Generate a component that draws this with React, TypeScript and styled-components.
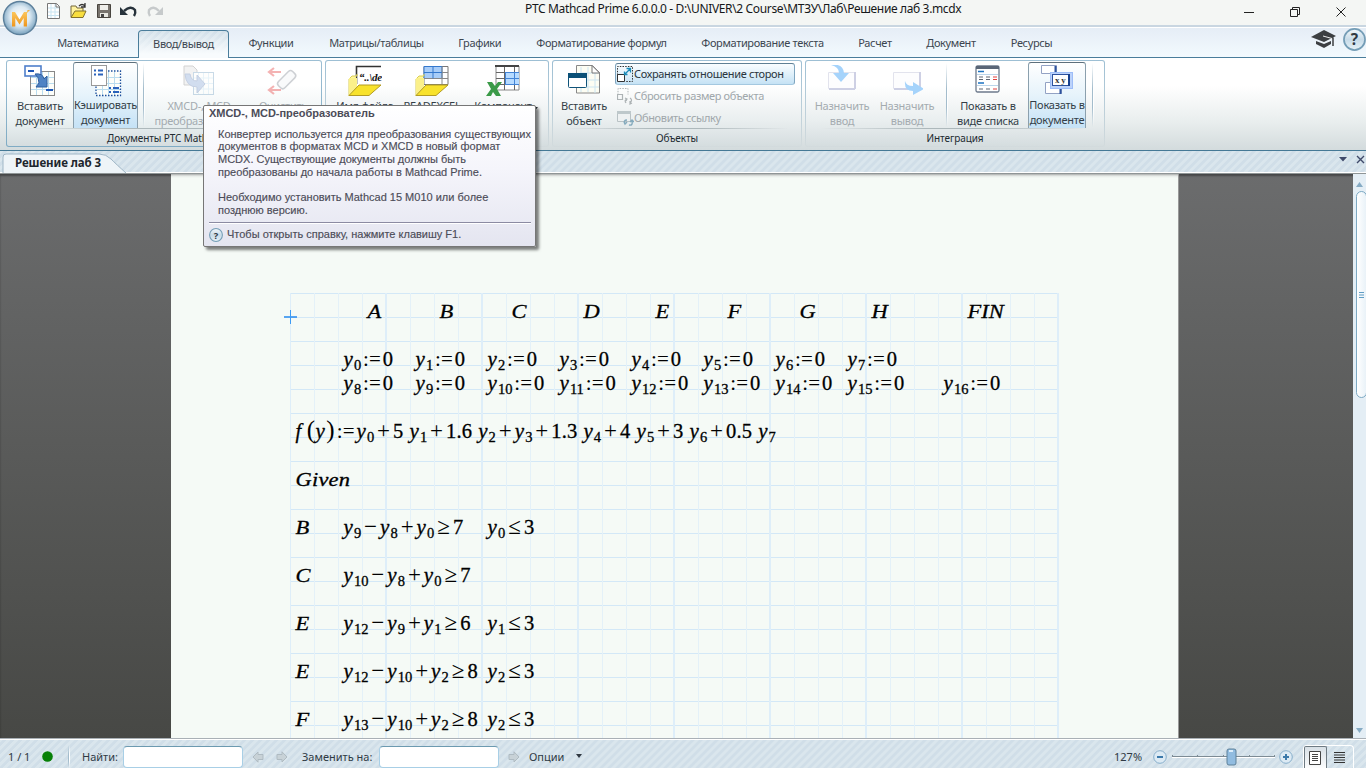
import React from 'react';
import styled, { createGlobalStyle, css } from 'styled-components';

const ui = `'Noto Sans', 'Open Sans', sans-serif`;
const stripes = `repeating-linear-gradient(135deg, #dae6ed 0 2.2px, #d0dee8 3px 5px, #dae6ed 5.66px)`;

const Global = createGlobalStyle`
  html, body { margin: 0; padding: 0; }
  body { width: 1366px; height: 768px; overflow: hidden; font-family: ${ui}; color: #36424c; }
  * { box-sizing: border-box; }
  svg { display: block; flex: none; }
`;

const Window = styled.div`
  position: relative;
  width: 1366px;
  height: 768px;
  display: flex;
  flex-direction: column;
  overflow: hidden;
  background: #f4f6f4;
`;

/* ---------- title bar ---------- */
const TitleBar = styled.header`
  height: 25px;
  flex: none;
  display: flex;
  align-items: flex-start;
  background: #f4f6f4;
`;
const QuickAccess = styled.div`
  width: 525px;
  height: 22px;
  padding-left: 46px;
  display: flex;
  align-items: center;
  gap: 8px;
`;
const WindowTitle = styled.div`
  flex: 1;
  font-size: 12px;
  line-height: 18px;
  letter-spacing: -0.35px;
  color: #16181a;
  white-space: nowrap;
`;
const WindowButtons = styled.div`
  width: 138px;
  height: 23px;
  margin-right: 2px;
  display: flex;
  align-items: center;
  justify-content: space-around;
`;
const LogoOrb = styled.div`
  position: absolute;
  left: 2px;
  top: 0;
`;

/* ---------- ribbon tabs ---------- */
const TabBar = styled.nav`
  height: 33px;
  flex: none;
  padding-left: 38px;
  display: flex;
  align-items: flex-end;
  border-top: 2px solid #c9d6e1;
  border-bottom: 1px solid #4a7d9b;
  background: linear-gradient(#fff 0 1px, #e5edf6 1px, #f3fafe);
`;
const Tab = styled.div<{ $w: number; $on?: boolean }>`
  width: ${p => p.$w}px;
  height: 28px;
  line-height: 28px;
  text-align: center;
  font-size: 11px;
  letter-spacing: -0.36px;
  white-space: nowrap;
  color: #3c4650;
  ${p => p.$on && css`
    margin-bottom: -1px;
    line-height: 25px;
    border: 1px solid #4a7d9b;
    border-bottom: 0;
    border-radius: 4px 4px 0 0;
    background: linear-gradient(rgba(248, 252, 254, 0), #f8fbfd 85%), ${stripes};
  `}
`;
const TabTools = styled.div`
  margin-left: auto;
  height: 29px;
  display: flex;
  align-items: flex-start;
  gap: 6px;
`;

/* ---------- ribbon ---------- */
const Ribbon = styled.section`
  height: 93px;
  flex: none;
  display: flex;
  gap: 3px;
  padding: 2px 0 0 6px;
  border-bottom: 1px solid #457996;
  background: linear-gradient(#fff 0 28px, #e8eded 65px, #d3dbdd);
`;
const Group = styled.div<{ $w: number; $hot?: boolean }>`
  width: ${p => p.$w}px;
  height: 87px;
  display: flex;
  flex-direction: column;
  border-radius: 3px;
  border: 1px solid transparent;
  background:
    linear-gradient(#fff 0 24px, ${p => (p.$hot ? '#eaf1f2' : '#e9eeef')} 60px, #d5dddf) padding-box,
    linear-gradient(#9dbfd4, ${p => (p.$hot ? '#7fabc4' : '#d3dbdd')}) border-box;
`;
const GroupBody = styled.div`
  position: relative;
  height: 69px;
  display: flex;
  align-items: flex-start;
  padding-top: 1px;
  background: linear-gradient(90deg, transparent 5%, #adb8bb 40%, #adb8bb 60%, transparent 95%) bottom 1px left 0 / 100% 1px no-repeat;
`;
const GroupName = styled.div<{ $left?: number }>`
  height: 16px;
  line-height: 16px;
  font-size: 10px;
  padding-left: ${p => p.$left ?? 0}px;
  text-align: ${p => (p.$left ? 'left' : 'center')};
  letter-spacing: -0.1px;
  color: #222b31;
  white-space: nowrap;
`;
const BigButton = styled.button<{ $w: number; $on?: boolean; $off?: boolean }>`
  width: ${p => p.$w}px;
  height: 66px;
  flex: none;
  padding: 2px 0 0;
  border: 1px solid transparent;
  display: flex;
  flex-direction: column;
  align-items: center;
  background: none;
  font: 11px/15px ${ui};
  letter-spacing: -0.25px;
  color: ${p => (p.$off ? '#a4abb0' : '#333e47')};
  white-space: nowrap;
  ${p => p.$on && css`
    border-radius: 3px 3px 0 0;
    border-top-color: #5d6f7c;
    border-left-color: #8ba0ae;
    border-right-color: #8ba0ae;
    border-bottom: 0;
    background: linear-gradient(#fff, #e6f3fb 50%, #c5e2f6);
  `}
`;
const BigIcon = styled.span<{ $off?: boolean; $h?: number }>`
  height: ${p => p.$h ?? 33}px;
  flex: none;
  display: flex;
  align-items: flex-start;
  opacity: ${p => (p.$off ? 0.32 : 1)};
`;
const DropMark = styled.svg`
  align-self: flex-end;
  margin: -6px 7px 0 0;
`;
const Separator = styled.i<{ $m: string; $h?: number }>`
  width: 2px;
  height: ${p => p.$h ?? 64}px;
  flex: none;
  margin: ${p => p.$m};
  background: linear-gradient(90deg, #a3bccc 50%, #fff 50%);
  mask: linear-gradient(transparent, #000 40%, #000 70%, transparent);
`;
const SmallStack = styled.div`
  padding-top: 1px;
  display: flex;
  flex-direction: column;
`;
const SmallButton = styled.button<{ $on?: boolean; $off?: boolean }>`
  width: 180px;
  height: 22px;
  padding: 0 0 0 1px;
  border: 1px solid transparent;
  border-radius: 3px;
  display: flex;
  align-items: center;
  gap: 0;
  background: none;
  font: 11px/20px ${ui};
  letter-spacing: -0.36px;
  color: ${p => (p.$off ? '#a0a7ab' : '#2b3640')};
  white-space: nowrap;
  ${p => p.$on && css`
    border-color: #5f7f94 #7fa5bf #a4c8e0 #7fa5bf;
    background: linear-gradient(#fafdff, #e0f0fa 50%, #c5e2f5);
  `}
`;

/* ---------- document tab strip ---------- */
const DocStrip = styled.div`
  height: 23px;
  flex: none;
  display: flex;
  align-items: flex-end;
  justify-content: space-between;
  border-bottom: 1px solid #8f9596;
  box-shadow: inset 0 -1px #fff;
  background: ${stripes};
`;
const DocTab = styled.div`
  position: relative;
  width: 128px;
  height: 20px;
  padding-left: 15px;
  font: bold 11.5px/20px ${ui};
  letter-spacing: -0.1px;
  color: #1d262d;
  white-space: nowrap;
  svg { position: absolute; left: 2px; top: 0; }
  span { position: relative; }
`;
const DocTools = styled.div`
  display: flex;
  align-items: center;
  height: 22px;
  padding-bottom: 5px;
  margin-right: 1px;
  gap: 9px;
`;

/* ---------- worksheet ---------- */
const Workspace = styled.main`
  position: relative;
  height: 564px;
  flex: none;
  display: flex;
  background: linear-gradient(#6b6c6d, #595a59 50%, #474845);
  box-shadow: inset 0 2px 2px rgba(0, 0, 0, 0.35);
`;
const Page = styled.div`
  width: 1008px;
  margin-left: 171px;
  border-right: 1px solid #999;
  padding: 119px 0 0 119px;
  overflow: hidden;
  background: linear-gradient(#a9acab, #e6eae7 2px, transparent 4px), #f5faf6;
`;
const Sheet = styled.div`
  position: relative;
  width: 769px;
  height: 480px;
  display: grid;
  grid-template-columns: repeat(32, 24px);
  grid-auto-rows: 24px;
  background-image:
    linear-gradient(90deg, #deeef9 2px, transparent 2px),
    linear-gradient(90deg, #e4f1f8 1px, transparent 1px),
    linear-gradient(#d3e8f7 1px, transparent 1px);
  background-size: 96px 24px, 24px 24px, 24px 24px;
  background-position: -1px 0, 0 0, 0 0;
`;
const Region = styled.div<{ $c: number; $r: number }>`
  grid-column: ${p => p.$c + 1} / span 1;
  grid-row: ${p => p.$r + 1};
  width: max-content;
  padding-left: 5.5px;
  display: flex;
  align-items: baseline;
  height: 36px;
  font: 20.5px/36px 'Liberation Serif', serif;
  color: #000;
  -webkit-text-stroke: 0.3px #000;
  white-space: pre;
`;
const Name = styled.i<{ $sp?: number }>`
  letter-spacing: ${p => p.$sp ?? 0}px;
  font-size: 19.5px;
  transform: translate(-0.5px, 0.7px) scaleX(1.15);
  transform-origin: 0 50%;
`;
const FunctionName = styled.i`
  width: 11px;
`;
const Var = styled.i`
  width: 10.4px;
  font-size: 21px;
`;
const Sub = styled.span`
  position: relative;
  top: 4px;
  font-size: 14.5px;
  line-height: 1;
`;
const Op = styled.span<{ $w: number; $size?: number }>`
  width: ${p => p.$w}px;
  font-size: ${p => p.$size ?? 23}px;
  line-height: 1;
  display: flex;
  justify-content: center;
  -webkit-text-stroke: 0;
`;
const Crosshair = styled.svg`
  position: absolute;
  left: -6px;
  top: 17px;
`;
const Num = styled.span`
  letter-spacing: 0.15px;
`;
const Paren = styled.span`
  width: 9px;
  text-align: center;
  font-size: 25px;
  line-height: 1;
  -webkit-text-stroke: 0;
`;
const ScrollTrack = styled.div`
  width: 13px;
  margin-left: auto;
  padding-top: 8px;
  display: flex;
  flex-direction: column;
  align-items: center;
  background: #e4eef5;
  color: #86abc4;
`;
const Thumb = styled.div`
  width: 11px;
  height: 207px;
  margin: 4px 0 auto 3px;
  border: 1px solid #7da9c3;
  border-radius: 6px;
  display: flex;
  align-items: center;
  justify-content: center;
  background: linear-gradient(90deg, #fff, #e9f2f8);
`;

/* ---------- status bar ---------- */
const StatusBar = styled.footer`
  height: 30px;
  flex: none;
  display: flex;
  align-items: center;
  padding-top: 6px;
  border-top: 1px solid #a9b0b6;
  font-size: 11px;
  color: #2f3a44;
  white-space: nowrap;
  box-shadow: inset 0 1px #fff;
  background: ${stripes};
`;
const Cell = styled.div<{ $w: number; $pad?: number }>`
  width: ${p => p.$w}px;
  flex: none;
  padding-left: ${p => p.$pad ?? 0}px;
  display: flex;
  align-items: center;
`;
const FindCell = styled(Cell)`
  gap: 12px;
`;
const Field = styled.div`
  width: 120px;
  height: 22px;
  flex: none;
  border: 1px solid #a8cfe6;
  border-top-color: #6c9ab0;
  border-radius: 4px;
  background: #fff;
`;
const ViewModes = styled.div`
  width: 51px;
  height: 24px;
  margin-left: 10px;
  border: 1px solid #fff;
  border-bottom: 0;
  border-radius: 4px 4px 0 0;
  display: flex;
`;
const ViewMode = styled.div<{ $on?: boolean }>`
  width: 27px;
  height: 24px;
  display: flex;
  align-items: center;
  justify-content: center;
  ${p => p.$on && css`
    width: 23px;
    border: 1px solid #6e7a82;
    border-bottom: 0;
    border-radius: 2px 2px 0 0;
    background: linear-gradient(#d8e0e6, #fff);
  `}
`;

/* ---------- tooltip ---------- */
const Tooltip = styled.aside`
  position: absolute;
  left: 203px;
  top: 105px;
  width: 333px;
  height: 142px;
  padding: 0 4px 0 5px;
  border: 1px solid #767676;
  border-radius: 2px;
  background: linear-gradient(#fff, #f5f5fb 45%, #e4e5f0);
  box-shadow: 3px 3px 3px rgba(0, 0, 0, 0.5);
  font: 11px/12.8px 'Liberation Sans', sans-serif;
  color: #4c4c58;
  white-space: nowrap;
`;
const TipTitle = styled.div`
  font-weight: bold;
  letter-spacing: -0.04px;
  line-height: 15px;
`;
const TipBody = styled.div`
  padding: 6.5px 0 0 9px;
  height: 102px;
  -webkit-text-stroke: 0.15px #4c4c58;
  border-bottom: 1px solid #8b8ba2;
  box-shadow: 0 1px #fff;
`;
const TipFooter = styled.div`
  height: 23px;
  display: flex;
  align-items: center;
  gap: 4px;
  -webkit-text-stroke: 0.15px #4c4c58;
`;

/* ---------- icons ---------- */
const GridPaper = ({ x, y, w, h, stroke = '#888' }: { x: number; y: number; w: number; h: number; stroke?: string }) => (
  <g>
    <rect x={x + 0.5} y={y + 0.5} width={w} height={h} fill="#fdfefa" stroke={stroke} />
    {[1, 2, 3].map(i => (
      <path key={i} d={`M${x + (w * i) / 4 + 0.5} ${y + 1}v${h - 1}M${x + 1} ${y + (h * i) / 4 + 0.5}h${w - 1}`} stroke="#b9dcef" />
    ))}
  </g>
);

const InsertDoc = () => (
  <svg width="32" height="32" fill="none">
    <GridPaper x={6} y={6} w={24} h={24} />
    <rect x="1" y="1" width="16" height="10" fill="#fff" stroke="#4f7fcb" strokeWidth="1.6" />
    <path d="M4 6h6M22 25h7" stroke="#1d55b5" strokeWidth="2" />
    <path d="M11 9q8-1 9 5l3-3v11H12l3-4q0-6-4-9z" fill="#4f83c4" stroke="#2f5e9e" />
  </svg>
);
const CacheDoc = () => (
  <svg width="32" height="32" fill="none">
    <GridPaper x={6} y={6} w={24} h={24} stroke="none" />
    <rect x="6" y="6" width="24.5" height="24.5" stroke="#1c4f9c" strokeDasharray="1.5 1.5" strokeWidth="1.3" />
    <rect x="1.5" y=".5" width="15" height="20" fill="#fff" stroke="#999" />
    <path d="M4 5.500h2m2 0h5M4 9.500h2m2 0h5M19 23h2m2 0h6M19 27h2m2 0h6" stroke="#2b62bb" strokeWidth="2" />
  </svg>
);
const ConvertDoc = () => (
  <svg width="32" height="32" fill="none">
    <path d="M1 1h9l4 4v15H1z" fill="#d9d9d9" stroke="#777" />
    <GridPaper x={10} y={7} w={20} h={22} stroke="#5b8db8" />
    <path d="M2 9h5q1 7 7 7v-6l8 9-8 9v-6Q3 22 2 9z" fill="#7397cf" stroke="#4c6fa8" />
  </svg>
);
const ClearIcon = () => (
  <svg width="32" height="32" fill="none">
    <path d="M14 7H3m4-4L2 7l5 4M14 25H3m4-4-5 4 5 4" stroke="#e01515" strokeWidth="2.2" />
    <rect x="10" y="10" width="20" height="9" rx="3" transform="rotate(-45 20 15)" fill="#eef0f3" stroke="#666f7b" strokeWidth="1.5" />
  </svg>
);
const Folder = () => (
  <>
    <path d="M1 31V14l3-3h5v-2" fill="#fff79a" stroke="#d8cc55" />
    <path d="M1 13h8v10L1 31z" fill="#fbf08a" />
    <path d="M1 30.500 11 20H33L21 30.500z" fill="#f8e22c" stroke="#b39c23" />
  </>
);
const PathFile = () => (
  <svg width="34" height="34" fill="none">
    <path d="M8 2h25v17H8z" fill="#fff" />
    <path d="M8.500 19V1.500h24.500" stroke="#333" strokeWidth="1.6" />
    <Folder />
    <text x="11" y="16" fontFamily="Liberation Serif" fontStyle="italic" fontWeight="bold" fontSize="11" fill="#111">“..\de</text>
  </svg>
);
const ExcelRead = () => (
  <svg width="34" height="34" fill="none">
    <path d="M9 1.500h24v18H9z" fill="#fff" stroke="#777" />
    <path d="M9 1.500h18v12H9z" fill="#a8cdf8" stroke="#3478cd" />
    <path d="M27 7.500h6M9 13.500h24M27 1.500v18" stroke="#888" />
    <path d="M9 7.500h18M18 1.500v12" stroke="#3478cd" />
    <Folder />
  </svg>
);
const ExcelComponent = () => (
  <svg width="34" height="34" fill="none">
    <path d="M10 1h23v24H10z" fill="#fff" stroke="#888" />
    <path d="M18 7h15v12H18z" fill="#b7dbff" />
    <path d="M9 0h24" stroke="#444" strokeWidth="4" />
    <path d="M10 7.500h23M10 13.500h23M10 19.500h23M18.500 2v23M28.500 2v23" stroke="#666" />
    <path d="M19 7.500h14M19 13.500h14M19 19.500h14M19.500 8v12M28.500 8v12" stroke="#4384d6" />
    <path d="M1 17h5l3 4 3-4h4l-5 7 4 7h-5l-3-4-2 4H0l5-7z" fill="#3b9a48" />
  </svg>
);
const InsertObject = () => (
  <svg width="34" height="32" fill="none">
    <path d="M9.500.5h16l7 7V28h-23z" fill="#fdfdf3" stroke="#888" />
    <path d="M13 8h19M12 15h20M12 22h20M14 2v25M21 2v25M28 8v20" stroke="#cce5f2" />
    <path d="M25 .5V8h7.500z" fill="#fff" stroke="#777" />
    <rect x="1.500" y="8.500" width="18" height="14" rx="1" fill="#fff" stroke="#0f5379" />
    <path d="M1 8h19v5H1z" fill="#0b5077" />
  </svg>
);
const Assign = ({ out }: { out?: boolean }) => (
  <svg width="32" height="34" fill="none" opacity=".9">
    <path d="M2.500 7.500h27v16h-27z" fill="#fdfdfe" stroke="#dfe0ec" />
    <path d="M29 7v17M3 24h26" stroke="#c9cce2" strokeWidth="2" />
    {out
      ? <path d="M14 16q1 5 8 5v-4l11 7-11 6v-4q-9 0-8-10z" fill="#9ccffb" />
      : <path d="M5 0q12-2 13 8h5l-8 9-8-9h6q0-6-8-8z" fill="#9ccffb" />}
  </svg>
);
const ListView = () => (
  <svg width="26" height="32" fill="none">
    <rect x="1" y="1" width="23" height="26" rx="1.500" fill="#fff" stroke="#6d7a8c" strokeWidth="1.300" />
    <path d="M1 1h23v3H1z" fill="#5a6677" />
    <path d="M2 9.500h21M2 20.500h21" stroke="#bcd5ea" />
    <path d="M3 6.500h6M3 18h6" stroke="#1d73c2" strokeWidth="1.500" />
    <path d="M4 12h4m3 0h4M4 14.500h4m3 0h4M4 24h4m3 0h4" stroke="#5e6470" />
    <path d="M18 12h4M18 14.500h4M18 24h4" stroke="#e04040" />
  </svg>
);
const DocView = () => (
  <svg width="32" height="30" fill="none">
    <path d="M.5.5h15v8H.5zM4.500 17.500h16v11h-16z" fill="#fff" stroke="#93a2c4" />
    <path d="M14.500 1v8M19.500 18v11" stroke="#2d529e" strokeWidth="2" />
    <rect x="9.500" y="7.500" width="22" height="16" fill="#bcd3fb" stroke="#9dbdf8" />
    <rect x="11.500" y="9.500" width="17" height="11" fill="#fff" stroke="#2d529e" />
    <path d="M28 9v12" stroke="#17408e" strokeWidth="2" />
    <text x="14" y="17.500" fontFamily="Liberation Serif" fontWeight="bold" fontSize="9" fill="#333">x y</text>
  </svg>
);
const KeepRatio = () => (
  <svg width="17" height="17" fill="none">
    <path d="M.5 9V.5h15v15H9" stroke="#333" strokeDasharray="1.500 1.200" />
    <path d="M.5 8.500h7v7h-7z" fill="#fff" stroke="#333" />
    <path d="m8 8 5-5M9.500 2.500h4v4M7.500 5.500v3h3" stroke="#198ab8" strokeWidth="1.300" />
  </svg>
);
const ResetSize = () => (
  <svg width="17" height="17" fill="none" stroke="#adb3b5">
    <path d="M1 7V.5h10v6" strokeDasharray="1.500 1.200" />
    <path d="M.5 6.500h5v5h-5zM9 15q-2-3 1-4m-2-1 2 1-1 2M13 10q3 2 0 5m2 0-2 1v-3" strokeWidth="1.200" />
  </svg>
);
const RefreshLink = () => (
  <svg width="17" height="17" fill="none">
    <path d="M.5 2.500h13v9H.5z" fill="#eef1f2" stroke="#b9c2c5" />
    <path d="M0 1h14v3H0z" fill="#bec8cb" />
    <path d="M8 14q-2-4 2-4m-3 2 1 2 2-2M12 15q4 1 3-4m-2 1 2-2 2 2" stroke="#84aabd" strokeWidth="1.400" />
  </svg>
);
const HelpBall = ({ size }: { size: number }) => (
  <svg width={size} height={size} viewBox="0 0 24 24">
    <defs>
      <linearGradient id="ball" x2="0" y2="1">
        <stop stopColor="#f3f8fb" /><stop offset=".5" stopColor="#c7dbe8" /><stop offset="1" stopColor="#e7f2f7" />
      </linearGradient>
    </defs>
    <circle cx="12" cy="12" r="11" fill="url(#ball)" stroke="#749db6" strokeWidth="1.800" />
    <text x="12" y="18" textAnchor="middle" fontFamily="Noto Sans" fontWeight="bold" fontSize="16" fill="#303942">?</text>
  </svg>
);
const FindArrow = ({ left }: { left?: boolean }) => (
  <svg width="12" height="12" fill="none">
    <path d="M1 3.500h5V.8L11 6l-5 5V8.500H1z" transform={left ? 'rotate(180 6 6)' : undefined} fill="#c8d2d7" stroke="#afbbc2" />
  </svg>
);
const ZoomBall = ({ plus }: { plus?: boolean }) => (
  <svg width="14" height="14" fill="none">
    <circle cx="7" cy="7" r="6.300" fill="#dceaf4" stroke="#87aecb" />
    <path d={plus ? 'M4 7h6M7 4v6' : 'M4 7h6'} stroke="#3b79aa" strokeWidth="2" />
  </svg>
);

/* ---------- formulas ---------- */
const opWidth: Record<string, number> = { '≔': 21.6, '≥': 18.8, '≤': 18.8, '+': 18.9, '−': 18.9 };

/** Splits a formula such as "y_10−y_8≥7" into typeset tokens. */
const Formula = ({ src }: { src: string }) => (
  <>
    {(src.match(/y_\d+|y|f|[()]|[≔≥≤+−]|[\d.]+| /g) ?? []).map((t, i) => {
      if (t.startsWith('y_')) return <React.Fragment key={i}><Var>y</Var><Sub>{t.slice(2)}</Sub></React.Fragment>;
      if (t === 'y') return <Var key={i}>y</Var>;
      if (t === 'f') return <FunctionName key={i}>f</FunctionName>;
      if (t === '(' || t === ')') return <Paren key={i}>{t}</Paren>;
      if (t === ' ') return <Op key={i} $w={6.1}> </Op>;
      if (opWidth[t]) return <Op key={i} $w={opWidth[t]} $size={t === '≔' ? 21 : 23}>{t === '≔' ? ':=' : t}</Op>;
      return <Num key={i}>{t}</Num>;
    })}
  </>
);

const headings: [string, number][] = [
  ['A', 3], ['B', 6], ['C', 9], ['D', 12], ['E', 15], ['F', 18], ['G', 21], ['H', 24], ['FIN', 28],
];
const constraints: [string, string, string?][] = [
  ['B', 'y_9−y_8+y_0≥7', 'y_0≤3'],
  ['C', 'y_10−y_8+y_0≥7'],
  ['E', 'y_12−y_9+y_1≥6', 'y_1≤3'],
  ['E', 'y_12−y_10+y_2≥8', 'y_2≤3'],
  ['F', 'y_13−y_10+y_2≥8', 'y_2≤3'],
];
const tabs: [string, number][] = [
  ['Математика', 100], ['Ввод/вывод', 91], ['Функции', 84], ['Матрицы/таблицы', 127], ['Графики', 79.5],
  ['Форматирование формул', 164], ['Форматирование текста', 158], ['Расчет', 67], ['Документ', 85], ['Ресурсы', 76],
];

export default function App() {
  return (
    <Window>
      <Global />
      <TitleBar>
        <QuickAccess>
          <svg width="16" height="16" fill="none"><path d="M1.500.5h9l3 3v12h-12z" fill="#fff" stroke="#777" /><path d="M5 1v14M9 1v14M2 5h11M2 9h11M2 12.500h11" stroke="#c9e5f2" /><path d="M10 .5v3.500h3.500" stroke="#777" /></svg>
          <svg width="18" height="16" fill="none"><path d="M1 14V3h5l1 2h6v3" fill="#fff3a0" stroke="#75683a" /><path d="M1 14.500 5 8h11l-3 6.500z" fill="#f8de3e" stroke="#80702c" /><path d="M9 3q3-3 6 0M15 0v4h-4" stroke="#333" strokeWidth="1.300" /></svg>
          <svg width="16" height="16" fill="none"><path d="M1.500 1.500h13v13h-13z" fill="#77736d" stroke="#48453f" /><path d="M4 2h8v5H4z" fill="#eeeeea" /><path d="M4 10h8v4H4z" fill="#e8e8e2" /><path d="M5 11h3v3H5z" fill="#444" /></svg>
          <svg width="18" height="16" fill="none"><path d="M4 8q7-6 11-1 1 3-1 6" stroke="#26323b" strokeWidth="2.400" /><path d="M0 4v8h8z" fill="#26323b" /></svg>
          <svg width="18" height="16" fill="none"><path d="M13 8Q7 2 3 7q-1 3 1 6" stroke="#c6cacb" strokeWidth="2.400" /><path d="M17 4v8H9z" fill="#c6cacb" /></svg>
        </QuickAccess>
        <WindowTitle>PTC Mathcad Prime 6.0.0.0 - D:\UNIVER\2 Course\МТЗУ\Лаб\Решение лаб 3.mcdx</WindowTitle>
        <WindowButtons>
          <svg width="10" height="10"><path d="M0 5.500h10" stroke="#222" /></svg>
          <svg width="10" height="10" fill="none" stroke="#222"><path d="M.5 2.500h7v7h-7zM2.500 2.500v-2h7v7h-2" /></svg>
          <svg width="10" height="10" fill="none" stroke="#222"><path d="m.5.5 9 9m0-9-9 9" /></svg>
        </WindowButtons>
      </TitleBar>

      <TabBar>
        {tabs.map(([label, w], i) => <Tab key={label} $w={w} $on={i === 1}>{label}</Tab>)}
        <TabTools>
          <svg width="26" height="22" fill="none"><path d="M0 9 13 2l12 6-12 6z" fill="#3c3f42" /><path d="M5 13v3l8 4 7-4v-3l-7 3z" fill="#3c3f42" /><path d="m12 7 10 3v8" stroke="#3c3f42" strokeWidth="1.500" /><path d="m12 8 9 2.500" stroke="#fff" strokeWidth=".9" /></svg>
          <HelpBall size={23} />
        </TabTools>
      </TabBar>
      <LogoOrb>
        <svg width="37" height="37">
          <defs>
            <radialGradient id="orb" cy=".45"><stop stopColor="#fff" /><stop offset=".6" stopColor="#dbe9f2" /><stop offset="1" stopColor="#8cb0c9" /></radialGradient>
            <linearGradient id="gold" x2="0" y2="1"><stop stopColor="#fbc65c" /><stop offset="1" stopColor="#ee961e" /></linearGradient>
          </defs>
          <circle cx="18" cy="18" r="16.500" fill="url(#orb)" stroke="#5d819c" strokeWidth="1.500" />
          <path d="M10 26.500V12h3l4.500 7.500L22 12h3v14.500h-3.300V18l-4.200 6.500L13.300 18v8.500z" fill="url(#gold)" />
          <path d="m25 13 .5-3h2.500z" fill="#f4b040" />
        </svg>
      </LogoOrb>

      <Ribbon>
        <Group $w={316} $hot>
          <GroupBody>
            <BigButton $w={66}><BigIcon><InsertDoc /></BigIcon>Вставить<br />документ</BigButton>
            <BigButton $w={65} $on><BigIcon $h={32}><CacheDoc /></BigIcon>Кэшировать<br />документ</BigButton>
            <Separator $m="1px 0 0 5px" />
            <BigButton $w={108} $off><BigIcon $off><ConvertDoc /></BigIcon>XMCD-, MCD<br />преобразователь</BigButton>
            <BigButton $w={60} $off><BigIcon $off><ClearIcon /></BigIcon>Очистить</BigButton>
          </GroupBody>
          <GroupName $left={100}>Документы PTC Mathcad</GroupName>
        </Group>
        <Group $w={224}>
          <GroupBody>
            <BigButton $w={78}><BigIcon><PathFile /></BigIcon>Имя файла</BigButton>
            <BigButton $w={56}><BigIcon><ExcelRead /></BigIcon>READEXCEL</BigButton>
            <BigButton $w={86}>
              <BigIcon><ExcelComponent /></BigIcon>Компонент
              <DropMark width="6" height="4"><path d="M0 0h6L3 3.500z" fill="#222b31" /></DropMark>
            </BigButton>
          </GroupBody>
        </Group>
        <Group $w={250}>
          <GroupBody>
            <BigButton $w={62}><BigIcon><InsertObject /></BigIcon>Вставить<br />объект</BigButton>
            <SmallStack>
              <SmallButton $on><KeepRatio />Сохранять отношение сторон</SmallButton>
              <SmallButton $off><ResetSize />Сбросить размер объекта</SmallButton>
              <SmallButton $off><RefreshLink />Обновить ссылку</SmallButton>
            </SmallStack>
          </GroupBody>
          <GroupName>Объекты</GroupName>
        </Group>
        <Group $w={300}>
          <GroupBody>
            <BigButton $w={72} $off><BigIcon><Assign /></BigIcon>Назначить<br />ввод</BigButton>
            <BigButton $w={58} $off><BigIcon><Assign out /></BigIcon>Назначить<br />вывод</BigButton>
            <Separator $m="1px 0 0 10px" />
            <BigButton $w={80}><BigIcon><ListView /></BigIcon>Показать в<br />виде списка</BigButton>
            <BigButton $w={58} $on><BigIcon $h={32}><DocView /></BigIcon>Показать в<br />документе</BigButton>
            <Separator $m="1px 0 0 6px" />
          </GroupBody>
          <GroupName>Интеграция</GroupName>
        </Group>
      </Ribbon>

      <DocStrip>
        <DocTab>
          <svg width="126" height="20"><path d="M1 20V4q0-3 3-3h93q7 0 12 5t15 14" fill="#eef4f8" stroke="#9fb6c6" /></svg>
          <span>Решение лаб 3</span>
        </DocTab>
        <DocTools>
          <svg width="8" height="5"><path d="M0 0h8L4 4.500z" fill="#3f4a6a" /></svg>
          <svg width="9" height="9"><path d="m1 1 7 7m0-7-7 7" stroke="#3f4a6a" strokeWidth="1.400" /></svg>
        </DocTools>
      </DocStrip>

      <Workspace>
        <Page>
          <Sheet>
            <Crosshair width="14" height="14"><path d="M0 7h13" stroke="#2389ef" strokeWidth="1.500" /><path d="M6.500 0v14" stroke="#3d9bf5" /></Crosshair>
            {headings.map(([t, c]) => <Region key={t} $c={c} $r={0}><Name>{t}</Name></Region>)}
            {[0, 1, 2, 3, 4, 5, 6, 7].map(i => <Region key={i} $c={2 + 3 * i} $r={2}><Formula src={`y_${i}≔0`} /></Region>)}
            {[0, 1, 2, 3, 4, 5, 6, 7].map(i => <Region key={i} $c={2 + 3 * i} $r={3}><Formula src={`y_${i + 8}≔0`} /></Region>)}
            <Region $c={27} $r={3}><Formula src="y_16≔0" /></Region>
            <Region $c={0} $r={5}><Formula src="f(y)≔y_0+5 y_1+1.6 y_2+y_3+1.3 y_4+4 y_5+3 y_6+0.5 y_7" /></Region>
            <Region $c={0} $r={7}><Name $sp={0.2}>Given</Name></Region>
            {constraints.map(([label, left, right], i) => (
              <React.Fragment key={i}>
                <Region $c={0} $r={9 + 2 * i}><Name>{label}</Name></Region>
                <Region $c={2} $r={9 + 2 * i}><Formula src={left} /></Region>
                {right && <Region $c={8} $r={9 + 2 * i}><Formula src={right} /></Region>}
              </React.Fragment>
            ))}
          </Sheet>
        </Page>
        <ScrollTrack>
          <svg width="7" height="5"><path d="M0 5h7L3.500 0z" fill="#86abc4" /></svg>
          <Thumb><svg width="5" height="8"><path d="M0 1.500h5M0 4h5M0 6.500h5" stroke="#5f9cc4" /></svg></Thumb>
          <svg width="7" height="12"><path d="M0 2h7L3.500 7z" fill="#86abc4" /></svg>
        </ScrollTrack>
      </Workspace>

      <StatusBar>
        <Cell $w={42} $pad={8}>1 / 1</Cell>
        <Cell $w={26}><svg width="11" height="11"><circle cx="5.500" cy="5.500" r="5.300" fill="#078007" /></svg></Cell>
        <Separator $m="0 12px 0 0" $h={23} />
        <Cell $w={41}>Найти:</Cell>
        <Field />
        <FindCell $w={59} $pad={9}><FindArrow left /><FindArrow /></FindCell>
        <Cell $w={77}>Заменить на:</Cell>
        <Field />
        <Cell $w={30} $pad={9}><FindArrow /></Cell>
        <Cell $w={47}>Опции</Cell>
        <Cell $w={538}><svg width="6" height="5"><path d="M0 0h6L3 4z" fill="#303942" /></svg></Cell>
        <Cell $w={39}>127%</Cell>
        <ZoomBall />
        <svg width="112" height="22" fill="none">
          <path d="M5 10.500h103M5.500 9v3M30.500 9v3M56.500 9v3M82.500 9v3M107.500 9v3" stroke="#7d8b94" />
          <path d="M5 11.500h103" stroke="#fff" />
          <rect x="60" y="3" width="9" height="16" rx="2" fill="#91bce0" stroke="#5d8099" />
          <path d="M62 5h4" stroke="#dceefb" strokeWidth="2" />
        </svg>
        <ZoomBall plus />
        <ViewModes>
          <ViewMode $on><svg width="12" height="14" fill="none"><path d="M.5.5h11v13H.5z" fill="#fff" stroke="#444" /><path d="M3 3.500h6M3 5.500h6M3 7.500h6M3 9.500h6" stroke="#444" /></svg></ViewMode>
          <ViewMode><svg width="11" height="12"><path d="M0 .5h11M0 3h11M0 5.500h11M0 8h11M0 10.500h11" stroke="#333" strokeWidth="1.200" /></svg></ViewMode>
        </ViewModes>
      </StatusBar>

      <Tooltip>
        <TipTitle>XMCD-, MCD-преобразователь</TipTitle>
        <TipBody>
          Конвертер используется для преобразования существующих<br />
          документов в форматах MCD и XMCD в новый формат<br />
          MCDX. Существующие документы должны быть<br />
          преобразованы до начала работы в Mathcad Prime.<br />
          <br />
          Необходимо установить Mathcad 15 M010 или более<br />
          позднюю версию.
        </TipBody>
        <TipFooter><HelpBall size={14} />Чтобы открыть справку, нажмите клавишу F1.</TipFooter>
      </Tooltip>
    </Window>
  );
}
